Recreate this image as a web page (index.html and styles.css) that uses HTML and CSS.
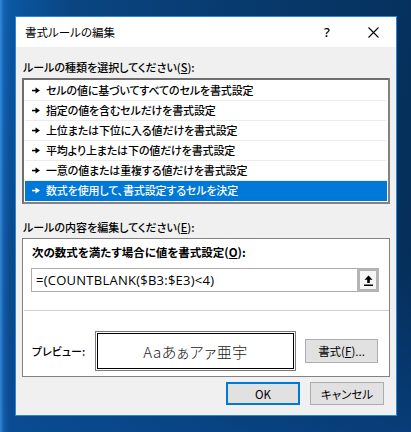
FILE: index.html
```html
<!DOCTYPE html>
<html lang="ja">
<head>
<meta charset="utf-8">
<title>書式ルールの編集</title>
<link rel="stylesheet" href="styles.css">
</head>
<body>
<div class="desktop">
  <div class="dialog">
    <div class="titlebar">
      <span class="title">書式ルールの編集</span>
      <div class="tbtns">
        <span class="tb help">?</span>
        <span class="tb close"><svg width="11" height="11" viewBox="0 0 11 11"><path d="M0.5 0.5 L10.5 10.5 M10.5 0.5 L0.5 10.5" stroke="#000" stroke-width="1.1" fill="none"/></svg></span>
      </div>
    </div>
    <div class="body">
      <div class="label">ルールの種類を選択してください(<u>S</u>):</div>
      <ul class="list">
        <li class="row"><svg class="arr" width="8" height="7" viewBox="0 0 8 7"><rect x="0" y="2.8" width="4" height="1.5"/><path d="M3.5 0.5 L8 3.5 L3.5 6.5 Z"/></svg><span>セルの値に基づいてすべてのセルを書式設定</span></li>
        <li class="row"><svg class="arr" width="8" height="7" viewBox="0 0 8 7"><rect x="0" y="2.8" width="4" height="1.5"/><path d="M3.5 0.5 L8 3.5 L3.5 6.5 Z"/></svg><span>指定の値を含むセルだけを書式設定</span></li>
        <li class="row"><svg class="arr" width="8" height="7" viewBox="0 0 8 7"><rect x="0" y="2.8" width="4" height="1.5"/><path d="M3.5 0.5 L8 3.5 L3.5 6.5 Z"/></svg><span>上位または下位に入る値だけを書式設定</span></li>
        <li class="row"><svg class="arr" width="8" height="7" viewBox="0 0 8 7"><rect x="0" y="2.8" width="4" height="1.5"/><path d="M3.5 0.5 L8 3.5 L3.5 6.5 Z"/></svg><span>平均より上または下の値だけを書式設定</span></li>
        <li class="row"><svg class="arr" width="8" height="7" viewBox="0 0 8 7"><rect x="0" y="2.8" width="4" height="1.5"/><path d="M3.5 0.5 L8 3.5 L3.5 6.5 Z"/></svg><span>一意の値または重複する値だけを書式設定</span></li>
        <li class="row selected"><svg class="arr" width="8" height="7" viewBox="0 0 8 7"><rect x="0" y="2.8" width="4" height="1.5"/><path d="M3.5 0.5 L8 3.5 L3.5 6.5 Z"/></svg><span>数式を使用して、書式設定するセルを決定</span></li>
      </ul>
      <div class="label label2">ルールの内容を編集してください(<u>E</u>):</div>
      <div class="panel">
        <div class="bold">次の数式を満たす場合に値を書式設定(<u>O</u>):</div>
        <div class="input">
          <span class="val">=(COUNTBLANK($B3:$E3)&lt;4)</span>
          <span class="refbtn"><svg width="9" height="11" viewBox="0 0 9 11"><path d="M4.5 0.5 L8.5 4.8 L5.8 4.8 L5.8 8 L3.2 8 L3.2 4.8 L0.5 4.8 Z" fill="#000"/><rect x="0" y="9.5" width="9" height="1.5" fill="#000"/></svg></span>
        </div>
        <div class="sep"></div>
        <div class="preview-row">
          <span class="plabel">プレビュー:</span>
          <div class="preview"><div class="preview-inner">Aaあぁアァ亜宇</div></div>
          <button class="btn fmt">書式(<u>F</u>)...</button>
        </div>
      </div>
      <div class="actions">
        <button class="btn ok">OK</button>
        <button class="btn cancel">キャンセル</button>
      </div>
    </div>
  </div>
</div>
</body>
</html>
```
FILE: styles.css
```css
* { box-sizing: border-box; }
html, body { margin: 0; padding: 0; }
body {
  width: 411px;
  height: 432px;
  overflow: hidden;
  font-family: "Noto Sans CJK JP", "Noto Sans", sans-serif;
  font-size: 11px;
  font-weight: 500;
  font-feature-settings: "palt" 1;
  color: #000;
}
.desktop {
  width: 411px;
  height: 432px;
  padding: 16px 0 0 15px;
  background:
    linear-gradient(to right, rgba(60,150,230,0.8) 0, rgba(30,110,200,0.4) 4px, rgba(0,0,0,0) 10px),
    linear-gradient(to bottom, rgba(0,0,0,0) 60%, rgba(10,90,180,0.35) 100%),
    linear-gradient(100deg, #0b5aa8 0%, #0a4582 15%, #07396b 55%, #052d57 100%);
}
.dialog {
  width: 382px;
  height: 400px;
  border: 1px solid #2b88d8;
  background: #f0f0f0;
  display: flex;
  flex-direction: column;
}
.titlebar {
  height: 30px;
  background: #fff;
  display: flex;
  align-items: center;
  justify-content: space-between;
  flex: none;
}
.title {
  padding-left: 9px;
  line-height: 30px;
  font-size: 11.5px;
  font-weight: 400;
}
.tbtns { display: flex; height: 30px; }
.tb {
  width: 46px;
  height: 30px;
  display: flex;
  align-items: center;
  justify-content: center;
}
.help { font-family: "Noto Sans", sans-serif; font-size: 13px; }
.close svg { display: block; }
.body {
  flex: 1;
  padding: 11px 6px 9px 6px;
  display: flex;
  flex-direction: column;
}
.label {
  line-height: 18px;
  padding-left: 1px;
  margin-bottom: 2px;
}
.list {
  list-style: none;
  margin: 0;
  padding: 1px;
  height: 126px;
  background: #fff;
  border: 2px solid #828282;
  border-top-color: #6e6e6e;
  border-left-color: #6e6e6e;
}
.row {
  height: 20px;
  border-bottom: 1px solid #ececec;
  display: flex;
  align-items: center;
  padding-left: 7px;
}
.row .arr { fill: #000; margin-right: 6px; flex: none; }
.row span { line-height: 19px; letter-spacing: -0.15px; }
.row.selected {
  background: #0078d7;
  color: #fff;
  border-bottom-color: #0078d7;
}
.row.selected .arr { fill: #fff; }
.label2 { margin-top: 14px; margin-bottom: 2px; }
.panel {
  background: #fff;
  border: 1px solid #828282;
  padding: 5px 10px 5px 9px;
}
.bold {
  font-weight: bold;
  font-size: 11.5px;
  line-height: 16px;
}
.input {
  margin-top: 8px;
  margin-left: -1px;
  height: 24px;
  border: 1px solid #acacac;
  display: flex;
  align-items: center;
  justify-content: space-between;
}
.val {
  font-family: "Open Sans", "Noto Sans", sans-serif;
  font-size: 13px;
  font-weight: 400;
  padding-left: 4px;
  letter-spacing: 0.25px;
}
.refbtn {
  width: 22px;
  height: 24px;
  margin: -1px -1px -1px 0;
  border: 3px solid #b4b4b4;
  background: #f6f6f6;
  display: flex;
  align-items: center;
  justify-content: center;
}
.refbtn svg { display: block; }
.sep {
  margin: 18px -10px 0 -8px;
  height: 1px;
  background: #cfcfcf;
}
.preview-row {
  margin-top: 20px;
  display: flex;
  align-items: center;
}
.plabel { width: 63px; flex: none; }
.preview {
  width: 201px;
  height: 40px;
  border: 1px solid #7a7a7a;
  padding: 1px;
}
.preview-inner {
  height: 100%;
  border: 1px solid #000;
  display: flex;
  align-items: center;
  justify-content: center;
  font-size: 15px;
  font-weight: 300;
  color: #222;
  letter-spacing: 0.5px;
}
.btn {
  font-family: "Noto Sans CJK JP", "Noto Sans", sans-serif;
  font-size: 11.5px;
  font-weight: 400;
  font-feature-settings: "palt" 1;
  background: #e1e1e1;
  border: 1px solid #adadad;
  color: #000;
  padding: 0;
  height: 23px;
  width: 74px;
}
.fmt { margin-left: 9px; width: 73px; height: 24px; }
.actions {
  margin-top: 5px;
  display: flex;
  justify-content: flex-end;
  gap: 10px;
  padding-right: 6px;
}
.ok { border: 2px solid #0078d7; }
```
